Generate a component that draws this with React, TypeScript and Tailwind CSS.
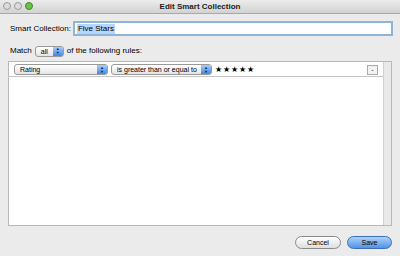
const font = "font-['Liberation_Sans',Arial,sans-serif]";

const Light = ({ c }: { c: string }) => (
  <span className={`w-[8px] h-[8px] rounded-full border ${c}`} />
);

const Popup = ({ label, w }: { label: string; w: string }) => (
  <div
    className={`flex items-center h-[11px] ${w} rounded-[3px] border border-[#9a9a9a] bg-gradient-to-b from-white to-[#e4e4e4] overflow-hidden`}
  >
    <span className="flex-1 pl-[5px] text-[7px] leading-none whitespace-nowrap text-black">{label}</span>
    <span className="w-[10px] h-full flex flex-col items-center justify-center bg-gradient-to-b from-[#a9cdf5] to-[#3f86e0] text-[4px] leading-[4px] text-[#0d2a55]">
      <span>▲</span>
      <span>▼</span>
    </span>
  </div>
);

export default function App() {
  return (
    <div className={`w-[400px] h-[256px] flex flex-col bg-[#ebebeb] overflow-hidden ${font}`}>
      <div className="h-[14px] flex items-center relative bg-gradient-to-b from-[#ececec] to-[#d2d2d2] border-b border-[#a8a8a8]">
        <div className="absolute left-[3px] top-[2px] flex gap-[3px]">
          <Light c="bg-[#dcdcdc] border-[#9a9a9a]" />
          <Light c="bg-[#dcdcdc] border-[#9a9a9a]" />
          <Light c="bg-[#6cc24a] border-[#3f8a2a]" />
        </div>
        <div className="flex-1 text-center text-[8px] font-semibold text-[#222]">Edit Smart Collection</div>
      </div>

      <div className="flex items-center mt-[7px] pl-[10px] pr-[7px] gap-[2px]">
        <span className="text-[8px] text-black">Smart Collection:</span>
        <div className="flex-1 h-[15px] flex items-center border-2 border-[#8fb4dc] bg-white px-[2px]">
          <span className="bg-[#b5d5fd] text-[8px] leading-[10px] px-[1px] text-black">Five Stars</span>
        </div>
      </div>

      <div className="flex items-center mt-[9px] pl-[10px] gap-[3px]">
        <span className="text-[8px] text-black">Match</span>
        <Popup label="all" w="w-[29px]" />
        <span className="text-[8px] text-black">of the following rules:</span>
      </div>

      <div className="mt-[4px] ml-[8px] mr-[8px] h-[165px] flex border border-[#b8b8b8] bg-white">
        <div className="flex-1 flex flex-col">
          <div className="h-[14px] mt-[1px] flex items-center gap-[3px] pl-[5px] pr-[5px] border-b border-[#c4c4c4]">
            <Popup label="Rating" w="w-[94px]" />
            <Popup label="is greater than or equal to" w="w-[101px]" />
            <span className="text-[8px] tracking-[1px] text-black">★★★★★</span>
            <span className="ml-auto w-[11px] h-[10px] flex items-center justify-center border border-[#aaa] bg-[#f2f2f2] text-[7px] leading-none text-[#333]">-</span>
          </div>
        </div>
        <div className="w-[8px] bg-[#e9e9e9] border-l border-[#d0d0d0]" />
      </div>

      <div className="flex justify-end gap-[6px] mt-[10px] pr-[8px]">
        <button className="w-[46px] h-[13px] rounded-full border border-[#8a8a8a] bg-gradient-to-b from-white to-[#dedede] text-[7px] leading-none text-black">Cancel</button>
        <button className="w-[45px] h-[13px] rounded-full border border-[#3c6fb8] bg-gradient-to-b from-[#aed0f7] to-[#4f93e6] text-[7px] leading-none text-black">Save</button>
      </div>
    </div>
  );
}
